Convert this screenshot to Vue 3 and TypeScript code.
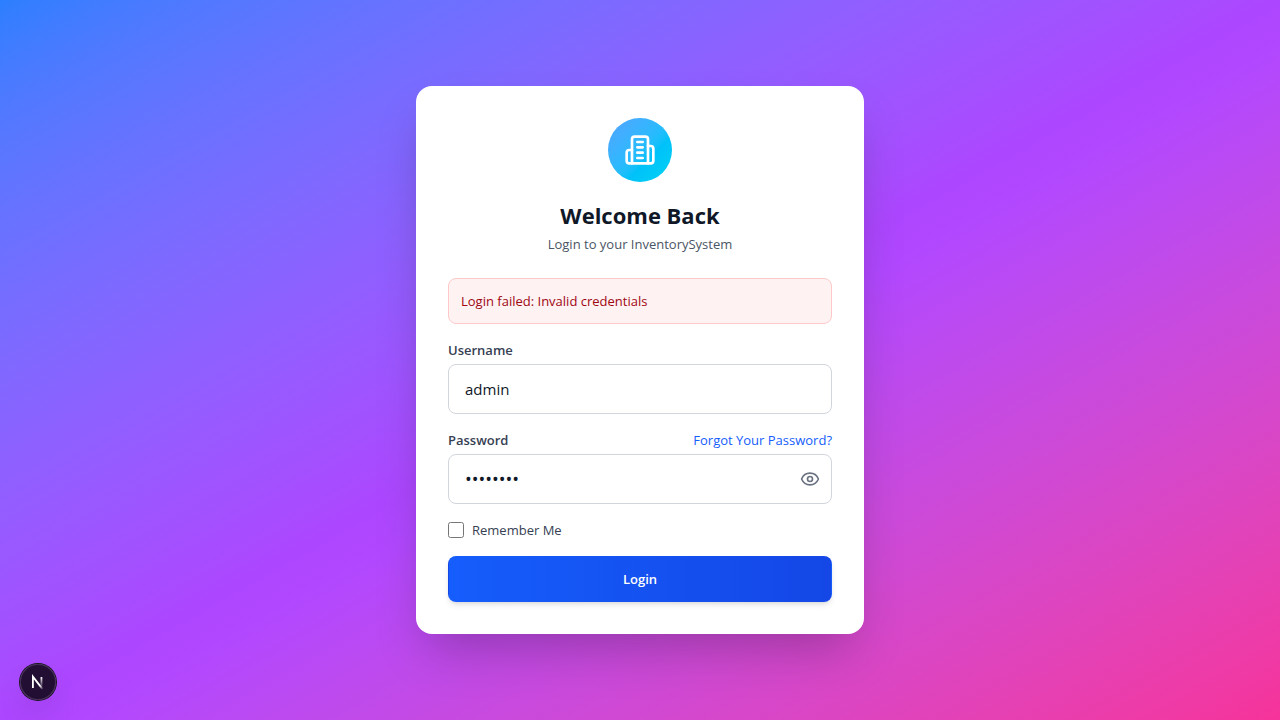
<script setup lang="ts">
import { ref } from 'vue'

const username = ref('admin')
const password = ref('password')
const remember = ref(false)
const showPassword = ref(false)
const error = ref('Login failed: Invalid credentials')
</script>

<template>
  <main class="page">
    <section class="card">
      <header class="head">
        <div class="logo">
          <svg viewBox="0 0 24 24" width="32" height="32" fill="none" stroke="currentColor" stroke-width="2" stroke-linecap="round" stroke-linejoin="round" aria-hidden="true">
            <path d="M6 22V4a2 2 0 0 1 2-2h8a2 2 0 0 1 2 2v18Z" />
            <path d="M6 12H4a2 2 0 0 0-2 2v6a2 2 0 0 0 2 2h2" />
            <path d="M18 9h2a2 2 0 0 1 2 2v9a2 2 0 0 1-2 2h-2" />
            <path d="M10 6h4M10 10h4M10 14h4M10 18h4" />
          </svg>
        </div>
        <h1>Welcome Back</h1>
        <p class="sub">Login to your InventorySystem</p>
      </header>

      <form class="form" @submit.prevent>
        <div v-if="error" class="alert" role="alert">{{ error }}</div>

        <div class="field">
          <label class="label" for="username">Username</label>
          <input id="username" v-model="username" class="input" type="text" autocomplete="username" />
        </div>

        <div class="field">
          <div class="row">
            <label class="label" for="password">Password</label>
            <a class="link" href="#">Forgot Your Password?</a>
          </div>
          <div class="box">
            <input id="password" v-model="password" class="input with-toggle" :class="{ masked: !showPassword }" :type="showPassword ? 'text' : 'password'" autocomplete="current-password" />
            <button class="toggle" type="button" aria-label="Show password" @click="showPassword = !showPassword">
              <svg viewBox="0 0 24 24" width="20" height="20" fill="none" stroke="currentColor" stroke-width="2" stroke-linecap="round" stroke-linejoin="round" aria-hidden="true">
                <path d="M2.062 12.348a1 1 0 0 1 0-.696 10.75 10.75 0 0 1 19.876 0 1 1 0 0 1 0 .696 10.75 10.75 0 0 1-19.876 0" />
                <circle cx="12" cy="12" r="3" />
              </svg>
            </button>
          </div>
        </div>

        <div class="remember">
          <input id="remember" v-model="remember" type="checkbox" />
          <label for="remember">Remember Me</label>
        </div>

        <button class="submit" type="submit">Login</button>
      </form>
    </section>

    <button class="dev" type="button" aria-label="Open dev tools">
      <svg viewBox="0 0 40 40" width="36" height="36" fill="none" aria-hidden="true">
        <defs>
          <linearGradient id="n-diagonal" x1="9.96" y1="11.12" x2="15.48" y2="17.97" gradientUnits="userSpaceOnUse">
            <stop stop-color="#fff" />
            <stop offset="0.6" stop-color="#fff" stop-opacity="0" />
          </linearGradient>
          <linearGradient id="n-stem" x1="11.82" y1="1.4" x2="11.79" y2="13.6" gradientUnits="userSpaceOnUse">
            <stop stop-color="#fff" />
            <stop offset="1" stop-color="#fff" stop-opacity="0" />
          </linearGradient>
        </defs>
        <g transform="translate(12 13)" stroke-width="2">
          <path d="M13.3 15.2 2.34 1v12.6" stroke="url(#n-diagonal)" />
          <path d="M11.825 1.5v11.6" stroke="url(#n-stem)" />
        </g>
      </svg>
    </button>
  </main>
</template>

<style>
body {
  margin: 0;
}
</style>

<style scoped>
.page,
.page * {
  box-sizing: border-box;
}

.page {
  min-height: 100vh;
  display: flex;
  align-items: center;
  justify-content: center;
  padding: 16px;
  background: linear-gradient(to bottom right in oklab, oklch(62.3% 0.214 259.815), oklch(62.7% 0.265 303.9), oklch(65.6% 0.241 354.308));
  font-family: "Segoe UI", "Open Sans", "Noto Sans", sans-serif;
  font-size: 13px;
  line-height: 20px;
  color: #101828;
}

.card {
  width: 100%;
  max-width: 448px;
  padding: 32px;
  border-radius: 16px;
  background: #fff;
  box-shadow: 0 25px 50px -12px rgba(0, 0, 0, 0.25);
}

.head {
  display: flex;
  flex-direction: column;
  align-items: center;
  margin-bottom: 24px;
  text-align: center;
}

.logo {
  width: 64px;
  height: 64px;
  display: flex;
  align-items: center;
  justify-content: center;
  margin-bottom: 16px;
  border-radius: 50%;
  color: #fff;
  background: linear-gradient(to bottom right in oklab, oklch(70.7% 0.165 254.624), oklch(78.9% 0.154 211.53));
}

h1 {
  margin: 0 0 2px;
  font-size: 22px;
  line-height: 34px;
  font-weight: 700;
}

.sub {
  margin: 0;
  color: #4a5565;
}

.form {
  display: flex;
  flex-direction: column;
  gap: 16px;
}

.alert {
  padding: 12px;
  border: 1px solid #ffc9c9;
  border-radius: 8px;
  background: #fef2f2;
  color: #9f0712;
}

.field {
  display: flex;
  flex-direction: column;
  gap: 4px;
}

.row {
  display: flex;
  justify-content: space-between;
}

.label {
  font-weight: 600;
  color: #364153;
}

.link {
  color: #155dfc;
  text-decoration: none;
}

.box {
  position: relative;
}

.input {
  display: block;
  width: 100%;
  height: 50px;
  margin: 0;
  padding: 12px 16px;
  border: 1px solid #d1d5dc;
  border-radius: 8px;
  background: #fff;
  color: #101828;
  font: inherit;
  font-size: 15px;
  line-height: 24px;
}

.with-toggle {
  padding-right: 48px;
}

.masked {
  font-size: 18px;
}

.toggle {
  position: absolute;
  top: 0;
  bottom: 0;
  right: 12px;
  display: flex;
  align-items: center;
  padding: 0;
  border: 0;
  background: none;
  color: #6a7282;
  cursor: pointer;
}

.remember {
  display: flex;
  align-items: center;
  gap: 8px;
  color: #364153;
}

.remember input {
  width: 16px;
  height: 16px;
  margin: 0;
}

.submit {
  padding: 12px 16px;
  border: 1px solid transparent;
  border-radius: 8px;
  background: linear-gradient(to right in oklab, #155dfc, #1447e6);
  color: #fff;
  font: inherit;
  font-weight: 600;
  cursor: pointer;
  box-shadow: 0 4px 6px -1px rgba(0, 0, 0, 0.1), 0 2px 4px -2px rgba(0, 0, 0, 0.1);
}

.dev {
  position: fixed;
  left: 20px;
  bottom: 20px;
  width: 36px;
  height: 36px;
  padding: 0;
  border: 0;
  border-radius: 50%;
  background: rgba(0, 0, 0, 0.8);
  box-shadow: 0 0 0 1px #171717, inset 0 0 0 1px rgba(255, 255, 255, 0.14), 0 16px 32px -8px rgba(0, 0, 0, 0.24);
}

.dev svg {
  display: block;
}
</style>
